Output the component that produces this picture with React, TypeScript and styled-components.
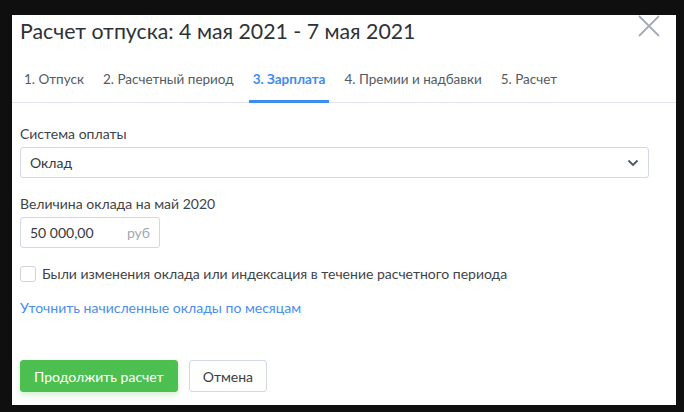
import React from "react";
import styled, { createGlobalStyle } from "styled-components";

const GlobalStyle = createGlobalStyle`
    body {
        margin: 0;
        background: #0f0f0f;
        font-family: Lato, "Open Sans", sans-serif;
    }
`;

const Backdrop = styled.div`
    padding: 15px 8px 7px 12px;
    height: 412px;
    box-sizing: border-box;
`;

const Dialog = styled.div`
    background: #ffffff;
    height: 390px;
    display: flex;
    flex-direction: column;
`;

const Header = styled.div`
    display: flex;
    justify-content: space-between;
    align-items: flex-start;
    padding: 0 16px 0 8px;
`;

const Title = styled.h2`
    margin: 0;
    padding-top: 2px;
    font-size: 21.3px;
    line-height: 28px;
    font-weight: 400;
    color: #2e3238;
`;

const Close = styled.button`
    border: none;
    background: none;
    padding: 0;
    width: 22px;
    height: 22px;
    cursor: pointer;
`;

const Tabs = styled.div`
    display: flex;
    gap: 11px;
    margin-top: 13px;
    padding: 0 8px;
    border-bottom: 1px solid #e4e6ee;
`;

const Tab = styled.div<{ active?: boolean }>`
    padding: 13px 4px 12px;
    font-size: 13.5px;
    line-height: 17px;
    color: ${(p) => (p.active ? "#3d8cf0" : "#555a62")};
    font-weight: ${(p) => (p.active ? 700 : 400)};
    border-bottom: 3px solid ${(p) => (p.active ? "#3d8cf0" : "transparent")};
    margin-bottom: -1px;
`;

const Body = styled.div`
    padding: 22px 27px 0 8px;
    display: flex;
    flex-direction: column;
`;

const Label = styled.div`
    font-size: 14px;
    line-height: 17px;
    color: #3f434a;
    margin-bottom: 5px;
`;

const Field = styled.div<{ width?: number }>`
    display: flex;
    align-items: center;
    justify-content: space-between;
    box-sizing: border-box;
    height: 31px;
    width: ${(p) => (p.width ? `${p.width}px` : "100%")};
    padding: 0 9px 0 9px;
    border: 1px solid #d3d7e6;
    border-radius: 3px;
    font-size: 14px;
    color: #35393f;
    margin-bottom: 17px;
`;

const Unit = styled.span`
    color: #a2a7b3;
`;

const CheckRow = styled.label`
    display: flex;
    align-items: center;
    gap: 6px;
    font-size: 14px;
    line-height: 17px;
    color: #3f434a;
`;

const Box = styled.span`
    width: 14px;
    height: 14px;
    border: 1px solid #cfd2da;
    border-radius: 3px;
`;

const Link = styled.a`
    margin-top: 17px;
    font-size: 14px;
    line-height: 17px;
    color: #4a8ef0;
    text-decoration: none;
`;

const Footer = styled.div`
    display: flex;
    gap: 11px;
    padding: 0 8px;
    margin-top: 44px;
`;

const Button = styled.button<{ primary?: boolean }>`
    height: 32px;
    box-sizing: border-box;
    padding: 0 13px;
    font-family: inherit;
    font-size: 14px;
    border-radius: 3px;
    cursor: pointer;
    border: 1px solid ${(p) => (p.primary ? "#4dbf50" : "#d3d7e6")};
    background: ${(p) => (p.primary ? "#4dbf50" : "#ffffff")};
    color: ${(p) => (p.primary ? "#ffffff" : "#3a3e44")};
    box-shadow: ${(p) => (p.primary ? "0 3px 6px rgba(77, 191, 80, 0.25)" : "none")};
`;

const tabs = [
    "1. Отпуск",
    "2. Расчетный период",
    "3. Зарплата",
    "4. Премии и надбавки",
    "5. Расчет",
];

const App: React.FC = () => {
    return (
        <Backdrop>
            <GlobalStyle />
            <Dialog>
                <Header>
                    <Title>Расчет отпуска: 4 мая 2021 - 7 мая 2021</Title>
                    <Close aria-label="Закрыть">
                        <svg width="22" height="22" viewBox="0 0 22 22">
                            <path d="M1 1 L21 21 M21 1 L1 21" stroke="#a3acb6" strokeWidth="1.8" />
                        </svg>
                    </Close>
                </Header>
                <Tabs>
                    {tabs.map((t, i) => (
                        <Tab key={t} active={i === 2}>
                            {t}
                        </Tab>
                    ))}
                </Tabs>
                <Body>
                    <Label>Система оплаты</Label>
                    <Field>
                        <span>Оклад</span>
                        <svg width="12" height="8" viewBox="0 0 12 8">
                            <path d="M1.5 1.5 L6 6 L10.5 1.5" fill="none" stroke="#4b5563" strokeWidth="1.8" />
                        </svg>
                    </Field>
                    <Label>Величина оклада на май 2020</Label>
                    <Field width={140}>
                        <span>50 000,00</span>
                        <Unit>руб</Unit>
                    </Field>
                    <CheckRow>
                        <Box />
                        Были изменения оклада или индексация в течение расчетного периода
                    </CheckRow>
                    <Link href="#">Уточнить начисленные оклады по месяцам</Link>
                </Body>
                <Footer>
                    <Button primary>Продолжить расчет</Button>
                    <Button>Отмена</Button>
                </Footer>
            </Dialog>
        </Backdrop>
    );
};

export default App;
